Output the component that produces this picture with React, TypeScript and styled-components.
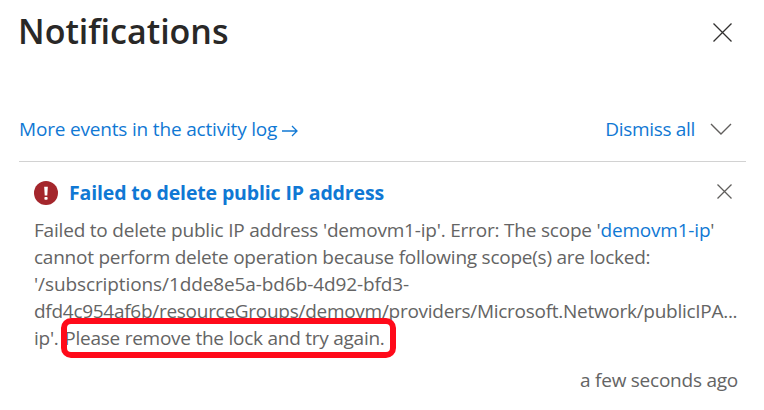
import React from "react";
import styled, { createGlobalStyle } from "styled-components";

const GlobalStyle = createGlobalStyle`
  *, *::after { box-sizing: border-box; }
  body {
    margin: 0;
    background: #fff;
    color: #646464;
    font-family: "Open Sans", "Noto Sans", sans-serif;
    font-size: 19px;
  }
`;

const Panel = styled.main`
  width: 764px;
  height: 410px;
  padding: 0 18px 0 19px;
  overflow: hidden;
  background: #fff;
`;

const Header = styled.header`
  display: flex;
  justify-content: space-between;
  align-items: center;
  height: 64px;
  padding-right: 14px;
`;

const Title = styled.h1`
  margin: 0 0 2px -1px;
  color: #292827;
  font-size: 34px;
  line-height: 42px;
  font-weight: 600;
`;

const Toolbar = styled.div`
  display: flex;
  justify-content: space-between;
  align-items: center;
  height: 98px;
  padding: 32px 14px 0 0;
  border-bottom: 1px solid #d2d2d2;
`;

const Link = styled.a<{ $spacing?: string }>`
  color: #1078d4;
  letter-spacing: ${(p) => p.$spacing ?? "inherit"};
  text-decoration: none;
  cursor: pointer;
`;

const Group = styled.div<{ $gap: number }>`
  display: flex;
  align-items: center;
  gap: ${(p) => p.$gap}px;
`;

const Icon = styled.svg<{ $drop?: number }>`
  display: block;
  flex: none;
  fill: none;
  margin-top: ${(p) => p.$drop ?? 0}px;
`;

const IconButton = styled.button`
  display: flex;
  padding: 0;
  border: 0;
  background: none;
  cursor: pointer;
`;

const Item = styled.article`
  padding: 18px 8px 0 15px;
`;

const ItemHeader = styled.div`
  display: flex;
  justify-content: space-between;
  align-items: center;
  height: 26px;
  padding-right: 6px;

  ${IconButton} {
    margin-bottom: 3px;
  }
`;

const ItemTitle = styled.h2`
  margin: 0;
  color: #1078d4;
  font-size: 19.5px;
  line-height: 26px;
  font-weight: 700;
  letter-spacing: -0.14px;
`;

const Message = styled.div`
  padding-top: 11px;
`;

const Line = styled.div<{ $spacing: number }>`
  height: 27px;
  line-height: 27px;
  white-space: nowrap;
  letter-spacing: ${(p) => p.$spacing}px;
`;

const Highlight = styled.span`
  position: relative;
  margin-left: 1px;

  &::after {
    content: "";
    position: absolute;
    left: -3px;
    top: -7px;
    width: 335px;
    height: 40px;
    border: 6px solid #ff0a1a;
    border-radius: 10px;
  }
`;

const Time = styled.div`
  margin-top: 15px;
  line-height: 27px;
  text-align: right;
  letter-spacing: -0.24px;
`;

const Close = ({ size, color }: { size: number; color: string }) => (
  <Icon width={size} height={size} viewBox={`0 0 ${size} ${size}`} stroke={color} strokeWidth="1.3">
    <path d={`M.5.5 ${size - 0.5} ${size - 0.5}M${size - 0.5}.5.5 ${size - 0.5}`} />
  </Icon>
);

export default function App() {
  return (
    <>
      <GlobalStyle />
      <Panel>
        <Header>
          <Title>Notifications</Title>
          <IconButton aria-label="Close"><Close size={19} color="#323130" /></IconButton>
        </Header>
        <Toolbar>
          <Group $gap={5}>
            <Link $spacing="-0.18px">More events in the activity log</Link>
            <Icon $drop={4} width="16" height="12" viewBox="0 0 16 12" stroke="#1078d4" strokeWidth="1.3">
              <path d="M0 6H15M10 1L15 6L10 11" />
            </Icon>
          </Group>
          <Group $gap={15}>
            <Link $spacing="-0.32px">Dismiss all</Link>
            <Icon width="22" height="12" viewBox="0 0 22 12" stroke="#605e5c" strokeWidth="1.4">
              <path d="M1 1L11 11L21 1" />
            </Icon>
          </Group>
        </Toolbar>
        <Item>
          <ItemHeader>
            <Group $gap={11}>
              <Icon width="24" height="24" viewBox="0 0 24 24">
                <circle cx="12" cy="12" r="12" fill="#a4262c" />
                <path d="M10.2 5.8H13.8L13.3 14.6H10.7Z" fill="#fff" />
                <rect x="10.4" y="15.9" width="3.2" height="2.9" rx=".8" fill="#fff" />
              </Icon>
              <ItemTitle>Failed to delete public IP address</ItemTitle>
            </Group>
            <IconButton aria-label="Dismiss"><Close size={15} color="#605e5c" /></IconButton>
          </ItemHeader>
          <Message>
            <Line $spacing={-0.2}>Failed to delete public IP address 'demovm1-ip'. Error: The scope '<Link>demovm1-ip</Link>'</Line>
            <Line $spacing={-0.24}>cannot perform delete operation because following scope(s) are locked:</Line>
            <Line $spacing={-0.1}>'/subscriptions/1dde8e5a-bd6b-4d92-bfd3-</Line>
            <Line $spacing={-0.28}>dfd4c954af6b/resourceGroups/demovm/providers/Microsoft.Network/publicIPA...</Line>
            <Line $spacing={-0.25}>ip'. <Highlight>Please remove the lock and try again.</Highlight></Line>
          </Message>
          <Time>a few seconds ago</Time>
        </Item>
      </Panel>
    </>
  );
}
